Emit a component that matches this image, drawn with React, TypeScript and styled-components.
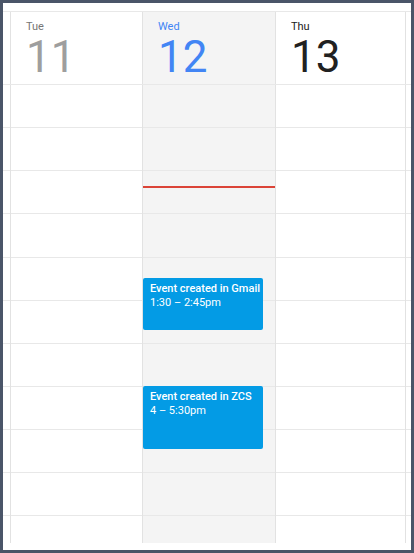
import React from "react";
import styled, { createGlobalStyle } from "styled-components";

const HOUR_HEIGHT = 43.14;
const START_HOUR = 9;
const HOURS = 11;

const GlobalStyle = createGlobalStyle`
  html, body {
    margin: 0;
    padding: 0;
    background: #4a5568;
  }
  body {
    font-family: Roboto, "Noto Sans", "Liberation Sans", sans-serif;
  }
  * { box-sizing: border-box; }
`;

const Frame = styled.div`
  width: 414px;
  height: 553px;
  padding: 3px;
  background: #4a5568;
`;

const Panel = styled.div`
  width: 408px;
  height: 547px;
  background: #ffffff;
  padding: 8px 0 7px 0;
  overflow: hidden;
`;

const HeaderRow = styled.div`
  display: flex;
  border-top: 1px solid #e8e8e8;
  border-bottom: 1px solid #e8e8e8;
  height: 74px;
`;

const BodyRow = styled.div`
  display: flex;
  height: 458px;
  overflow: hidden;
`;

const Gutter = styled.div<{ $width?: number }>`
  flex: ${(p) => (p.$width ? `0 0 ${p.$width}px` : "1 1 auto")};
  display: flex;
  flex-direction: column;
`;

const DayCol = styled.div<{ $width: number; $today?: boolean; $last?: boolean }>`
  position: relative;
  flex: 0 0 ${(p) => p.$width}px;
  display: flex;
  flex-direction: column;
  border-left: 1px solid #e2e2e2;
  border-right: ${(p) => (p.$last ? "1px solid #e2e2e2" : "none")};
  background: ${(p) => (p.$today ? "#f4f4f4" : "#ffffff")};
`;

const DayHead = styled.div`
  padding: 8px 0 5px 15px;
`;

type Tone = "past" | "today" | "future";

const DayName = styled.div<{ $tone: Tone }>`
  font-size: 11px;
  line-height: 14px;
  margin-bottom: 1px;
  color: ${(p) =>
    p.$tone === "today" ? "#4285f4" : p.$tone === "past" ? "#757575" : "#212121"};
`;

const DayNumber = styled.div<{ $tone: Tone }>`
  font-size: 44px;
  line-height: 44px;
  font-weight: 400;
  color: ${(p) =>
    p.$tone === "today" ? "#4285f4" : p.$tone === "past" ? "#9e9e9e" : "#212121"};
`;

const HourCell = styled.div`
  flex: 0 0 ${HOUR_HEIGHT}px;
  height: ${HOUR_HEIGHT}px;
  border-bottom: 1px solid #e8e8e8;
`;

const NowLine = styled.div`
  position: absolute;
  left: 0;
  right: 0;
  height: 2px;
  background: #db4437;
`;

const EventCard = styled.div`
  position: absolute;
  left: 0;
  width: 120px;
  background: #039be5;
  border-radius: 2px;
  padding: 4px 7px;
  color: #ffffff;
  font-size: 11px;
  line-height: 14px;
  overflow: hidden;
`;

const EventTitle = styled.div`
  font-weight: 500;
  white-space: nowrap;
`;

const EventTime = styled.div`
  font-weight: 400;
`;

type CalEvent = { title: string; time: string; start: number; end: number };

type Day = {
  name: string;
  num: number;
  tone: Tone;
  width: number;
  events: CalEvent[];
  now?: number;
};

const days: Day[] = [
  { name: "Tue", num: 11, tone: "past", width: 132, events: [] },
  {
    name: "Wed",
    num: 12,
    tone: "today",
    width: 133,
    now: 11 + 20 / 60,
    events: [
      { title: "Event created in Gmail", time: "1:30 – 2:45pm", start: 13.5, end: 14.75 },
      { title: "Event created in ZCS", time: "4 – 5:30pm", start: 16, end: 17.5 },
    ],
  },
  { name: "Thu", num: 13, tone: "future", width: 131, events: [] },
];

const hours = Array.from({ length: HOURS }, (_, i) => i);

const Cells = () => (
  <>
    {hours.map((h) => (
      <HourCell key={h} />
    ))}
  </>
);

export default function App() {
  return (
    <>
      <GlobalStyle />
      <Frame>
        <Panel>
          <HeaderRow>
            <Gutter $width={7} />
            {days.map((d, i) => (
              <DayCol key={d.name} $width={d.width} $today={d.tone === "today"} $last={i === days.length - 1}>
                <DayHead>
                  <DayName $tone={d.tone}>{d.name}</DayName>
                  <DayNumber $tone={d.tone}>{d.num}</DayNumber>
                </DayHead>
              </DayCol>
            ))}
            <Gutter />
          </HeaderRow>
          <BodyRow>
            <Gutter $width={7}>
              <Cells />
            </Gutter>
            {days.map((d, i) => (
              <DayCol key={d.name} $width={d.width} $today={d.tone === "today"} $last={i === days.length - 1}>
                <Cells />
                {d.now !== undefined && (
                  <NowLine style={{ top: (d.now - START_HOUR) * HOUR_HEIGHT }} />
                )}
                {d.events.map((e) => (
                  <EventCard
                    key={e.title}
                    style={{
                      top: (e.start - START_HOUR) * HOUR_HEIGHT - 1,
                      height: (e.end - e.start) * HOUR_HEIGHT - 2,
                    }}
                  >
                    <EventTitle>{e.title}</EventTitle>
                    <EventTime>{e.time}</EventTime>
                  </EventCard>
                ))}
              </DayCol>
            ))}
            <Gutter>
              <Cells />
            </Gutter>
          </BodyRow>
        </Panel>
      </Frame>
    </>
  );
}
